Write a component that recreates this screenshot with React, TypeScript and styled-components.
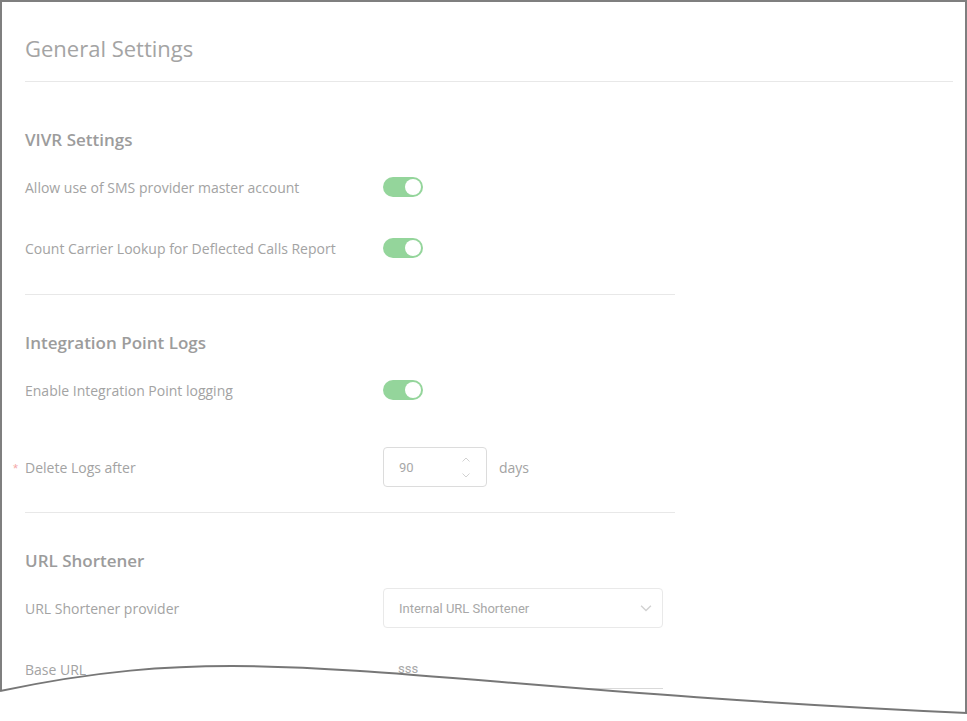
import React from "react"
import styled, { createGlobalStyle } from "styled-components"

const GlobalStyle = createGlobalStyle`
    html, body {
        margin: 0;
        padding: 0;
        background: #ffffff;
    }
    body {
        font-family: "Open Sans", "Liberation Sans", Arial, sans-serif;
        color: #a0a0a0;
    }
    * {
        box-sizing: border-box;
    }
`

const Page = styled.div`
    position: relative;
    width: 967px;
    height: 721px;
    overflow: hidden;
    background: #fff;
`

const Frame = styled.div`
    width: 967px;
    height: 721px;
    border: 2px solid #7f7f7f;
    border-bottom: none;
    padding-left: 23px;
    padding-right: 12px;
`

const Header = styled.div`
    padding: 31px 0 18px;
    border-bottom: 1px solid #e8e8e8;
    margin-bottom: 10px;
`

const Title = styled.h1`
    margin: 0;
    font-size: 22px;
    line-height: 30px;
    font-weight: 400;
    color: #a4a4a4;
`

const Section = styled.section<{ $last?: boolean; $pad?: number }>`
    width: 650px;
    padding-top: 35px;
    padding-bottom: ${p => (p.$last ? 0 : p.$pad ?? 25)}px;
    border-bottom: ${p => (p.$last ? "none" : "1px solid #e8e8e8")};
`

const SectionTitle = styled.h2`
    margin: 0 0 14px;
    font-size: 17px;
    line-height: 26px;
    font-weight: 600;
    color: #9c9c9c;
`

const Row = styled.div<{ $gap?: number }>`
    display: flex;
    align-items: center;
    height: 40px;
    margin-bottom: ${p => p.$gap ?? 21}px;
    &:last-child {
        margin-bottom: 0;
    }
`

const Label = styled.div`
    width: 358px;
    flex-shrink: 0;
    font-size: 14px;
    color: #a3a3a3;
    white-space: nowrap;
`

const Required = styled.span`
    display: inline-block;
    width: 12px;
    margin-left: -12px;
    color: #f4a9a9;
    font-family: "Liberation Sans", Arial, sans-serif;
    font-size: 13px;
`

const Control = styled.div`
    display: flex;
    align-items: center;
    gap: 12px;
`

const Toggle = styled.span<{ $on: boolean }>`
    position: relative;
    display: inline-block;
    width: 40px;
    height: 20px;
    border-radius: 10px;
    background: ${p => (p.$on ? "#94d59b" : "#d9d9d9")};
    &::after {
        content: "";
        position: absolute;
        top: 2px;
        left: ${p => (p.$on ? 22 : 2)}px;
        width: 16px;
        height: 16px;
        border-radius: 50%;
        background: #fff;
    }
`

const NumberBox = styled.div`
    display: flex;
    align-items: center;
    justify-content: space-between;
    width: 104px;
    height: 40px;
    padding: 0 16px 0 15px;
    border: 1px solid #dcdcdc;
    border-radius: 4px;
`

const Value = styled.span`
    font-family: Roboto, "Liberation Sans", Arial, sans-serif;
    font-size: 13px;
    color: #a8a8a8;
`

const Spinner = styled.div`
    display: flex;
    flex-direction: column;
    gap: 11px;
`

const Unit = styled.span`
    font-size: 14px;
    color: #a3a3a3;
`

const Select = styled.div`
    display: flex;
    align-items: center;
    justify-content: space-between;
    width: 280px;
    height: 40px;
    padding: 0 10px 0 15px;
    border: 1px solid #e9e9e9;
    border-radius: 4px;
`

const LineInput = styled.div`
    display: flex;
    align-items: center;
    width: 280px;
    height: 40px;
    padding: 0 15px;
    border-bottom: 1px solid #d9d9d9;
`

const TornEdge = styled.svg`
    position: absolute;
    left: 0;
    top: 0;
    pointer-events: none;
`

const Chevron = ({ up = false, w = 8, h = 5 }) => (
    <svg width={w} height={h} viewBox="0 0 8 5">
        <path
            d={up ? "M0.5 4.5 L4 1 L7.5 4.5" : "M0.5 0.5 L4 4 L7.5 0.5"}
            fill="none"
            stroke="#d2d2d2"
            strokeWidth="1"
        />
    </svg>
)

// torn paper edge along the bottom of the screenshot
const curve = "M0,691 C100,670 170,666 232,666 C400,667 560,694 967,713"

const App = () => {
    return (
        <Page>
            <GlobalStyle />
            <Frame>
                <Header>
                    <Title>General Settings</Title>
                </Header>

                <Section $pad={26}>
                    <SectionTitle>VIVR Settings</SectionTitle>
                    <Row>
                        <Label>Allow use of SMS provider master account</Label>
                        <Toggle $on />
                    </Row>
                    <Row>
                        <Label>Count Carrier Lookup for Deflected Calls Report</Label>
                        <Toggle $on />
                    </Row>
                </Section>

                <Section>
                    <SectionTitle>Integration Point Logs</SectionTitle>
                    <Row $gap={37}>
                        <Label>Enable Integration Point logging</Label>
                        <Toggle $on />
                    </Row>
                    <Row>
                        <Label>
                            <Required>*</Required>Delete Logs after
                        </Label>
                        <Control>
                            <NumberBox>
                                <Value>90</Value>
                                <Spinner>
                                    <Chevron up />
                                    <Chevron />
                                </Spinner>
                            </NumberBox>
                            <Unit>days</Unit>
                        </Control>
                    </Row>
                </Section>

                <Section $last>
                    <SectionTitle>URL Shortener</SectionTitle>
                    <Row>
                        <Label>URL Shortener provider</Label>
                        <Select>
                            <Value>Internal URL Shortener</Value>
                            <Chevron w={12} h={7} />
                        </Select>
                    </Row>
                    <Row>
                        <Label>Base URL</Label>
                        <LineInput>
                            <Value>sss</Value>
                        </LineInput>
                    </Row>
                </Section>
            </Frame>

            <TornEdge width="967" height="721" viewBox="0 0 967 721">
                <path d={`${curve} L967,721 L0,721 Z`} fill="#ffffff" />
                <path d={curve} fill="none" stroke="#777777" strokeWidth="2" />
            </TornEdge>
        </Page>
    )
}

export default App
